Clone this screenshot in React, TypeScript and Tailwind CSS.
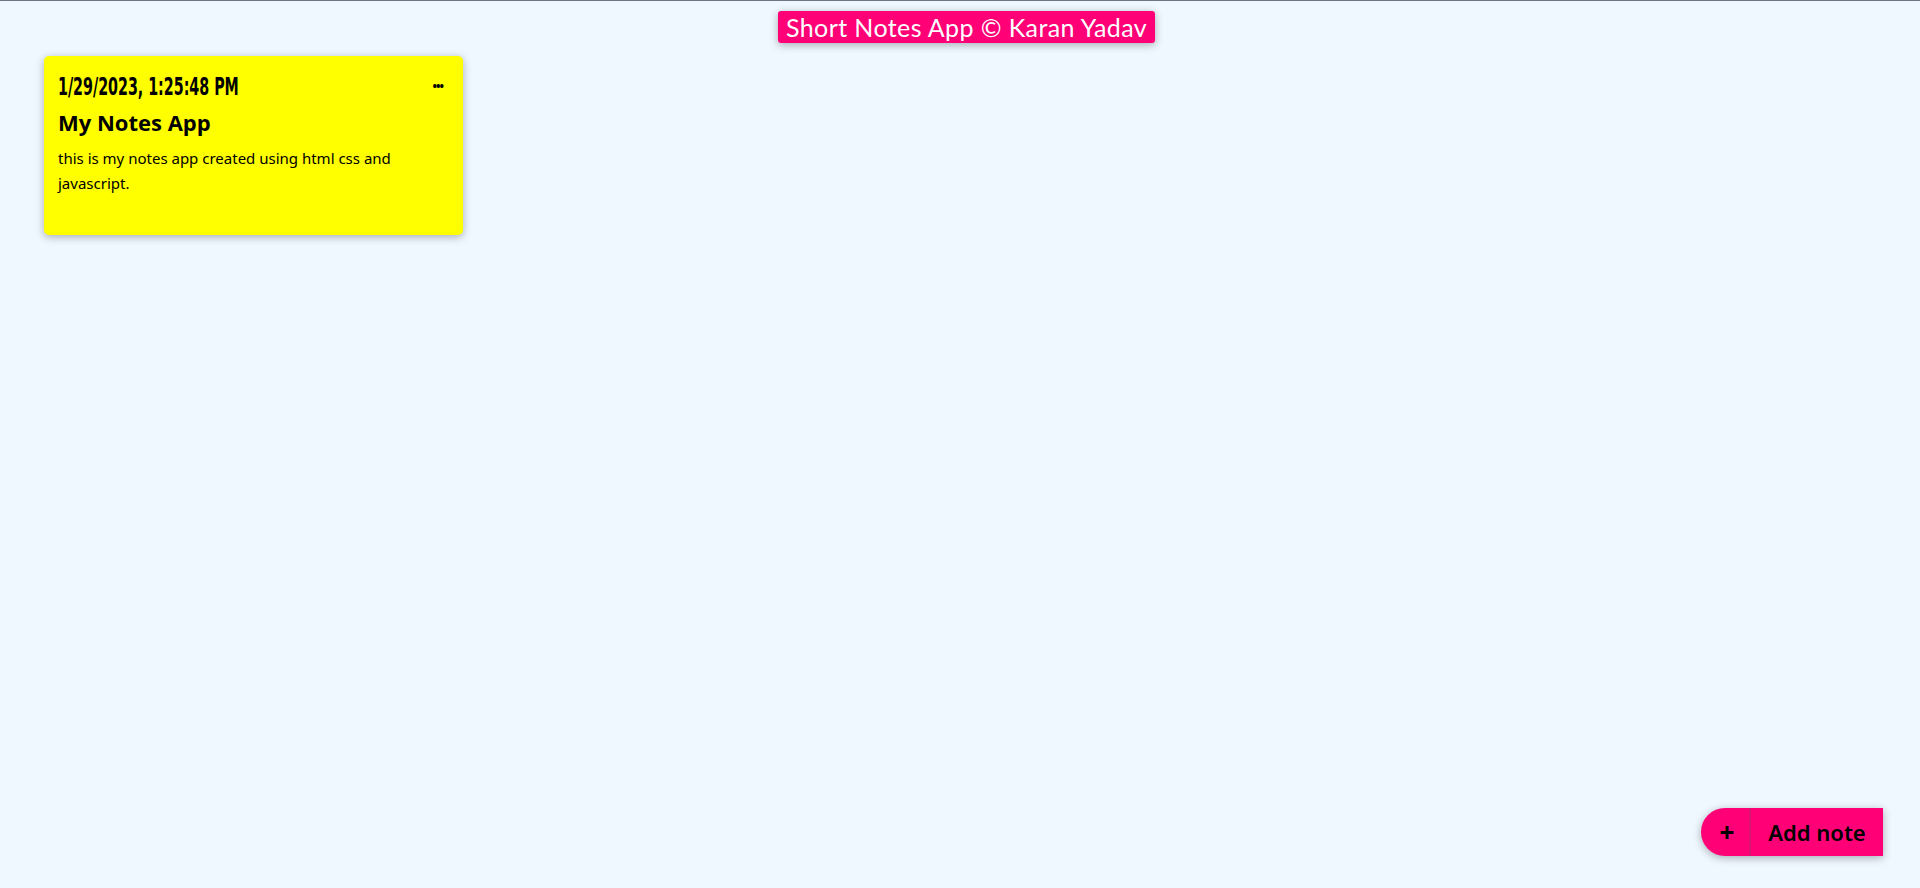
import React from "react";

export default function App() {
  return (
    <div className="relative h-[888px] w-full overflow-hidden border-t border-[#6b7684] bg-[#eff7ff]">
      <div className="flex justify-center pl-[13px] pt-[10px]">
        <div
          className="flex h-[32px] w-[377px] items-center justify-center whitespace-nowrap rounded-[3px] bg-[#ff0077] text-[25px] leading-none tracking-[0.4px] text-white shadow-[0_2px_8px_rgba(0,0,0,0.3)]"
          style={{ fontFamily: "'Lato', 'Noto Sans', sans-serif" }}
        >
          Short Notes App © Karan Yadav
        </div>
      </div>
      <div className="px-[44px] pt-[13px]">
        <div className="flex h-[179px] w-[419px] flex-col rounded-[5px] bg-[#ffff00] px-[14px] pt-[16px] shadow-[0_2px_8px_rgba(0,0,0,0.3)]">
          <div className="flex items-center justify-between">
            <span
              className="inline-block origin-left scale-x-[0.66] whitespace-nowrap text-[24px] leading-[30px] font-bold text-black"
              style={{ fontFamily: "'DejaVu Sans Condensed', 'DejaVu Sans', sans-serif" }}
            >
              1/29/2023, 1:25:48 PM
            </span>
            <span className="mr-[6px] text-[12px] font-bold leading-none tracking-[-1px] text-black">•••</span>
          </div>
          <div
            className="mt-[6px] text-[22px] font-bold leading-[28px] text-black"
            style={{ fontFamily: "'Open Sans', sans-serif" }}
          >
            My Notes App
          </div>
          <p
            className="mt-[10px] w-[360px] text-[15px] leading-[25px] text-black"
            style={{ fontFamily: "'Noto Sans', sans-serif" }}
          >
            this is my notes app created using html css and javascript.
          </p>
        </div>
      </div>
      <button className="absolute bottom-[32px] right-[37px] flex h-[48px] items-stretch overflow-hidden rounded-l-full rounded-r-[5px] bg-[#ff0077] text-black shadow-[0_2px_8px_rgba(0,0,0,0.3)]">
        <span className="flex w-[50px] items-center justify-center border-r-2 border-[#d8156f] pl-[4px] text-[26px] font-bold leading-none">+</span>
        <span
          className="flex w-[132px] items-center justify-center whitespace-nowrap text-[22px] font-semibold"
          style={{ fontFamily: "'Noto Sans', sans-serif" }}
        >
          Add note
        </span>
      </button>
    </div>
  );
}
